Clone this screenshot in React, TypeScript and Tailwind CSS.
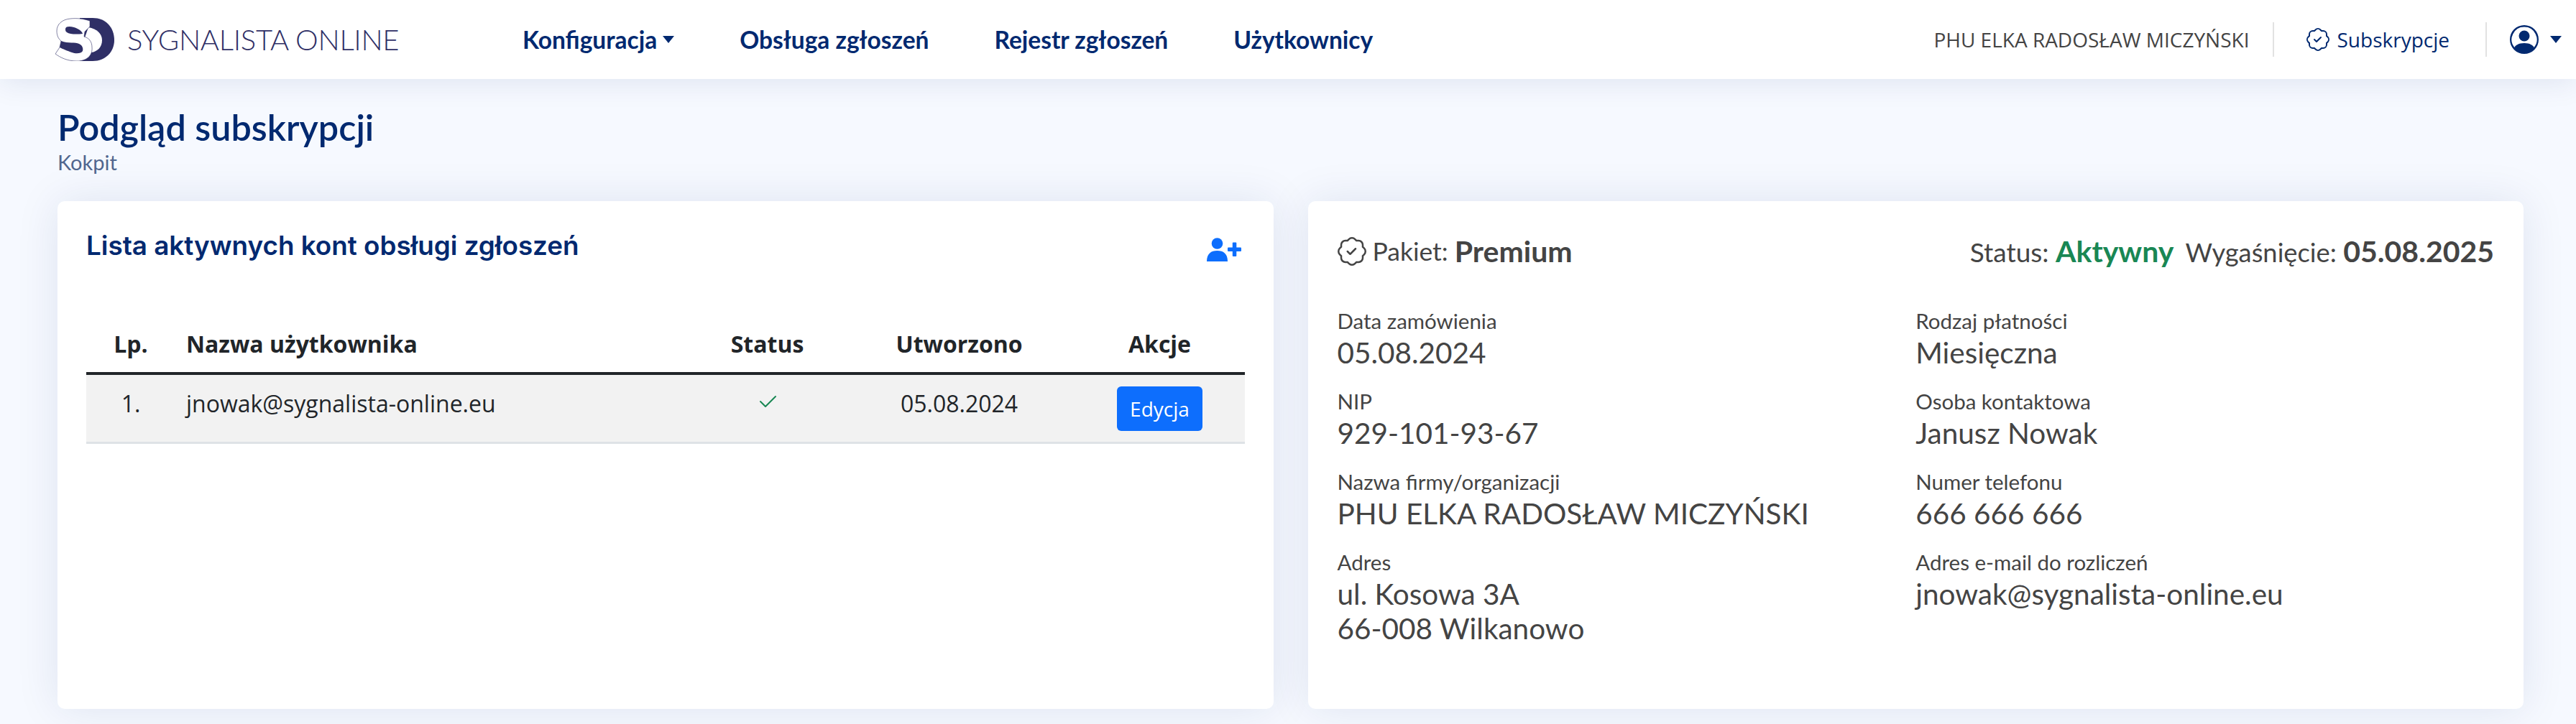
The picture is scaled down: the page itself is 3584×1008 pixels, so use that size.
import { BsPatchCheck, BsPersonCircle, BsCheck2 } from 'react-icons/bs';

const nunito = "font-['Lato',sans-serif]";
const openSans = "font-['Open_Sans',sans-serif]";

function Caret({ className }: { className: string }) {
    return <span className={`inline-block w-0 h-0 border-x-[8px] border-x-transparent border-t-[10px] ${className}`} />;
}

function Logo() {
    return (
        <svg width="82" height="60" viewBox="0 0 82 60" className="shrink-0">
            <path d="M34 0H52C70 0 82 13 82 31C82 47 70 60 52 60H34Z" fill="#2f2f66" />
            <path d="M46 13C58 15 65 22 65 31C65 41 58 47 50 48L40 30Z" fill="#fff" />
            <path
                d="M48 4C39 1 30 0 21 1C9 2 2 9 2 18C2 24 4 29 8 32L6 41L0 50C7 55 16 60 30 60C44 60 52 52 51 41C51 33 47 28 40 26L41 19L48 12Z"
                fill="#fff"
                stroke="#2f2f66"
                strokeWidth="0.6"
            />
            <path d="M14 15C15 11 21 12 26 13C32 15 37 18 38 22C30 23 20 23 16 20C14 19 14 17 14 15Z" fill="#2f2f66" />
            <path d="M8 32C18 36 28 33 33 36C38 38 39 43 38 46C36 50 28 50 23 48C17 46 10 43 6 41Z" fill="#2f2f66" />
        </svg>
    );
}

function UserPlus() {
    return (
        <svg width="48" height="33" viewBox="0 0 48 33" fill="#0d6efd" className="shrink-0 mt-[13px] mr-[5px]">
            <circle cx="14.5" cy="8" r="7.8" />
            <path d="M0 33C0 22 6 18 14.5 18C23 18 29 22 29 33Z" />
            <rect x="29" y="13.5" width="19" height="5.5" rx="1" />
            <rect x="35.8" y="6.5" width="5.5" height="19.5" rx="1" />
        </svg>
    );
}

function Field({ label, children }: { label: string; children: React.ReactNode }) {
    return (
        <div className="mb-[24px]">
            <div className={`${nunito} text-[29.5px] leading-[40px] text-[#444444]`}>{label}</div>
            <div className={`${nunito} text-[40.5px] leading-[48px] text-[#444444]`}>{children}</div>
        </div>
    );
}

export default function App() {
    return (
        <div className="h-screen overflow-hidden bg-[#f6f9ff]">
            <header className="relative h-[110px] bg-white shadow-[0_4px_40px_rgba(1,41,112,0.1)] flex items-center pl-[77px] pr-[20px]">
                <div className="flex items-center w-[650px] shrink-0">
                    <Logo />
                    <span className={`${nunito} ml-[18px] text-[40px] font-light text-[#2f2f66] tracking-[-0.3px]`}>SYGNALISTA ONLINE</span>
                </div>
                <nav className={`${nunito} flex items-center gap-[91px] text-[33.5px] font-bold text-[#012970]`}>
                    <span className="flex items-center gap-[8px]">Konfiguracja <Caret className="border-t-[#012970]" /></span>
                    <span>Obsługa zgłoszeń</span>
                    <span>Rejestr zgłoszeń</span>
                    <span>Użytkownicy</span>
                </nav>
                <div className="ml-auto flex items-center">
                    <span className={`${openSans} text-[28px] text-[#444444] pr-[33px]`}>PHU ELKA RADOSŁAW MICZYŃSKI</span>
                    <div className="h-[48px] border-l-2 border-[#e2e2e2] pl-[45px] pr-[50px] flex items-center gap-[10px] text-[#012970]">
                        <BsPatchCheck className="text-[32px]" />
                        <span className={`${openSans} text-[28px]`}>Subskrypcje</span>
                    </div>
                    <div className="h-[48px] border-l-2 border-[#e2e2e2] pl-[32px] flex items-center gap-[16px] text-[#012970]">
                        <BsPersonCircle className="text-[40px]" />
                        <Caret className="border-t-[#012970]" />
                    </div>
                </div>
            </header>

            <main className="pl-[80px] pr-[73px]">
                <div className="h-[170px] pt-[36px]">
                    <h1 className={`${nunito} text-[50.3px] leading-[62px] font-semibold text-[#012970]`}>Podgląd subskrypcji</h1>
                    <div className={`${nunito} text-[29px] leading-[36px] text-[#51678f]`}>Kokpit</div>
                </div>

                <div className="grid grid-cols-2 gap-[48px] h-[707px]">
                    <section className="bg-white rounded-[10px] shadow-[0_0_60px_rgba(1,41,112,0.1)] px-[40px]">
                        <div className="flex justify-between items-start pt-[38px] h-[160px]">
                            <h2 className="font-['Inter',sans-serif] text-[36.8px] leading-[48px] font-semibold text-[#012970]">Lista aktywnych kont obsługi zgłoszeń</h2>
                            <UserPlus />
                        </div>
                        <table className={`${openSans} w-full text-[32px] text-[#212529] table-fixed`}>
                            <thead>
                                <tr className="h-[80px] border-b-4 border-[#212529] font-bold">
                                    <th className="w-[139px] font-bold pr-[15px]">Lp.</th>
                                    <th className="text-left font-bold">Nazwa użytkownika</th>
                                    <th className="w-[212px] font-bold">Status</th>
                                    <th className="w-[322px] font-bold">Utworzono</th>
                                    <th className="w-[236px] font-bold">Akcje</th>
                                </tr>
                            </thead>
                            <tbody>
                                <tr className="h-[96px] bg-[#f2f2f2] border-b-[3px] border-[#dee2e6]">
                                    <td className="text-center align-top pt-[16px] pr-[15px]">1.</td>
                                    <td className="align-top pt-[16px]">jnowak@sygnalista-online.eu</td>
                                    <td className="align-top pt-[16px]"><BsCheck2 className="text-[32px] text-[#198754] mx-auto mt-[6px]" /></td>
                                    <td className="text-center align-top pt-[16px]">05.08.2024</td>
                                    <td className="text-center align-top pt-[16px]">
                                        <button className="w-[119px] h-[62px] bg-[#0d6efd] text-white text-[28px] rounded-[6px]">Edycja</button>
                                    </td>
                                </tr>
                            </tbody>
                        </table>
                    </section>

                    <section className="bg-white rounded-[10px] shadow-[0_0_60px_rgba(1,41,112,0.1)] pl-[41px] pr-[41px] pt-[40px]">
                        <div className={`${nunito} flex items-center justify-between h-[60px] text-[37px] text-[#444444] mb-[47px]`}>
                            <div className="flex items-center">
                                <BsPatchCheck className="text-[40px] mr-[9px]" />
                                <span className="text-[35.5px]">Pakiet:&nbsp;</span><b className="text-[41px]">Premium</b>
                            </div>
                            <div>
                                Status: <b className="text-[41px] text-[#198754]">Aktywny</b><span className="ml-[16px] text-[36.3px]">Wygaśnięcie:</span> <b className="text-[41px]">05.08.2025</b>
                            </div>
                        </div>
                        <div className="grid grid-cols-2">
                            <div>
                                <Field label="Data zamówienia">05.08.2024</Field>
                                <Field label="NIP">929-101-93-67</Field>
                                <Field label="Nazwa firmy/organizacji">PHU ELKA RADOSŁAW MICZYŃSKI</Field>
                                <Field label="Adres">ul. Kosowa 3A<br />66-008 Wilkanowo</Field>
                            </div>
                            <div>
                                <Field label="Rodzaj płatności">Miesięczna</Field>
                                <Field label="Osoba kontaktowa">Janusz Nowak</Field>
                                <Field label="Numer telefonu">666 666 666</Field>
                                <Field label="Adres e-mail do rozliczeń">jnowak@sygnalista-online.eu</Field>
                            </div>
                        </div>
                    </section>
                </div>
            </main>
        </div>
    );
}
